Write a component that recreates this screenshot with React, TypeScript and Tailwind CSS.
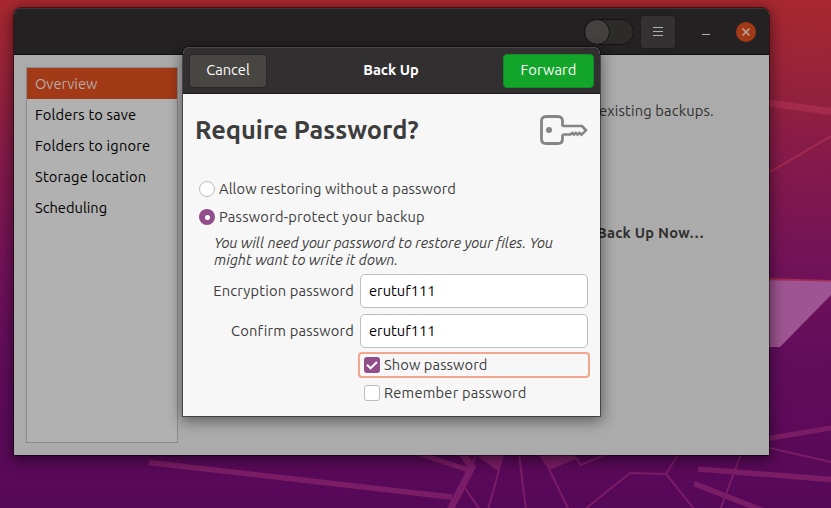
import type { ReactNode } from "react";

const sections = [
  { label: "Overview", tracking: "tracking-[-0.05px]" },
  { label: "Folders to save", tracking: "tracking-[0.17px]" },
  { label: "Folders to ignore", tracking: "tracking-[0.17px]" },
  { label: "Storage location", tracking: "tracking-[0.21px]" },
  { label: "Scheduling", tracking: "tracking-[0px]" },
];

function Wallpaper() {
  return (
    <svg className="absolute inset-0" width="831" height="508" viewBox="0 0 831 508">
      <defs>
        <linearGradient id="sky" x1="0" y1="0" x2="0" y2="1">
          <stop offset="0" stopColor="#a8282f" />
          <stop offset="0.12" stopColor="#9b2437" />
          <stop offset="0.3" stopColor="#861b49" />
          <stop offset="0.5" stopColor="#741358" />
          <stop offset="0.7" stopColor="#620d5b" />
          <stop offset="1" stopColor="#560858" />
        </linearGradient>
      </defs>
      <rect width="831" height="508" fill="url(#sky)" />
      <g stroke="#a42a4e" fill="none">
        <path d="M765 102.500 L831 111.500" strokeWidth="7" />
        <path d="M765 175 L831 136" strokeWidth="2" />
        <path d="M765 279 L831 281" strokeWidth="2" />
      </g>
      <path d="M765 280 L831 281.500 V295 L780 347 H765 Z" fill="#9e5492" />
      <g stroke="#7b1d66" fill="none">
        <path d="M149 462.500 L420 493.500 L452 497" strokeWidth="5.500" />
        <path d="M420 454 L471 471" strokeWidth="5" />
        <path d="M462 453 L472 467 L450 510" strokeWidth="7" />
        <path d="M476 454 L471 468 M465 488 L480 510" strokeWidth="2" />
        <path d="M499 470 L488 510 M519 454 L526 510 M549 469 L569 510" strokeWidth="2" />
        <path d="M574 455 L581 465 L606 454" strokeWidth="2" />
        <path d="M584 510 L630 473 L666 474 L679 453 M666 474 L695 510" strokeWidth="2" />
        <path d="M741 454 L720 510" strokeWidth="2" />
        <path d="M698 469 L831 479.500" strokeWidth="5.500" />
        <path d="M694 483.500 L764 511" strokeWidth="5.500" />
        <path d="M765 439 L831 428" strokeWidth="5" />
        <path d="M765 447 L831 462" strokeWidth="2" />
      </g>
      <g fill="#7b1d66">
        <path d="M476 455 H504 L499 472 Z" />
        <path d="M539 455 H574 L576 459 L549 470 Z" />
      </g>
    </svg>
  );
}

function KeyIcon() {
  return (
    <svg width="48" height="32" viewBox="0 0 48 32" fill="none" stroke="#858585">
      <path
        d="M22.500 11.500 V6 Q22.500 1.500 18 1.500 H6 Q1.500 1.500 1.500 6 V24 Q1.500 28.500 6 28.500 H18 Q22.500 28.500 22.500 24 V19.500"
        strokeWidth="2.800"
      />
      <path
        d="M22.500 11 H42 L46 15.300 L41.500 19.800 L39.500 18 L37.500 19.500 L35.800 18 L34 19.500 L32.200 18 L30.500 19.500 H22.500"
        strokeWidth="2.600"
      />
      <circle cx="9" cy="15" r="3" fill="#858585" stroke="none" />
    </svg>
  );
}

function Field({ label, tracking, value }: { label: string; tracking: string; value: string }) {
  return (
    <div className="flex items-center">
      <span className={`w-[171px] pb-[2px] text-right ${tracking}`}>{label}</span>
      <div className="ml-[6px] flex h-[34px] w-[228px] items-center rounded-[5px] border border-[#bfbcba] bg-white pb-[2px] pl-2 text-black">
        {value}
      </div>
    </div>
  );
}

function Radio({ checked, children }: { checked?: boolean; children: ReactNode }) {
  return (
    <div className="flex h-7 items-center gap-1">
      {checked ? (
        <span className="flex size-4 items-center justify-center rounded-full bg-[#924d8b]">
          <span className="size-[5px] rounded-full bg-white" />
        </span>
      ) : (
        <span className="size-4 rounded-full border border-[#bfbcba] bg-white" />
      )}
      {children}
    </div>
  );
}

export default function App() {
  return (
    <div className="relative h-[508px] w-[831px] overflow-hidden font-['Ubuntu','Noto_Sans',sans-serif] text-[14.667px] leading-[17px] whitespace-nowrap text-[#3d3d3d]">
      <Wallpaper />

      <main className="absolute top-[8px] left-[14px] flex h-[447px] w-[755px] flex-col overflow-hidden rounded-t-[7px] bg-[#ababab] shadow-[0_0_0_1px_rgba(0,0,0,0.45),0_3px_14px_2px_rgba(0,0,0,0.5)]">
        <header className="flex h-[47px] shrink-0 items-center justify-end border-t border-b border-t-[#373535] border-b-[#121111] bg-[#242122] pr-[13px]">
          <div className="h-[26px] w-[50px] rounded-full border border-[#121212] bg-[#2d2b29]">
            <div className="-mt-px -ml-px size-[26px] rounded-full border border-[#121212] bg-[#434240]" />
          </div>
          <div className="ml-[6px] flex h-[34px] w-[36px] items-center justify-center rounded-[4px] border border-[#1e1c1d] bg-[#343132]">
            <div className="flex flex-col gap-[3px]">
              <span className="h-px w-[10px] bg-[#b0b0b0]" />
              <span className="h-px w-[10px] bg-[#b0b0b0]" />
              <span className="h-px w-[10px] bg-[#b0b0b0]" />
            </div>
          </div>
          <span className="mt-[5px] ml-[26px] h-px w-2 bg-[#b0b0b0]" />
          <div className="ml-[26px] flex size-5 items-center justify-center rounded-full bg-[#a33a17]">
            <svg width="8" height="8" viewBox="0 0 8 8" stroke="#b7aaa5" strokeWidth="1.500">
              <path d="M0.500 0.500 L7.500 7.500 M7.500 0.500 L0.500 7.500" />
            </svg>
          </div>
        </header>
        <div className="flex grow justify-between p-3">
          <nav className="h-[376px] w-[152px] border border-[#8a8a8a] bg-[#b1b1b1] text-black">
            {sections.map((s, i) => (
              <div
                key={s.label}
                className={`flex h-[31px] items-center pb-px pl-2 ${s.tracking} ${i === 0 ? "bg-[#a23917] text-[#b9aba4]" : ""}`}
              >
                {s.label}
              </div>
            ))}
          </nav>
          <div className="flex w-[160px] flex-col pt-[35px] text-[#303030]">
            <span className="pl-[2px] tracking-[0.16px]">existing backups.</span>
            <span className="mt-[105px] font-bold tracking-[0.25px]">Back Up Now…</span>
          </div>
        </div>
      </main>

      <section className="absolute top-[47px] left-[183px] flex h-[369px] w-[417px] flex-col overflow-hidden rounded-t-[7px] bg-[#f7f7f7] shadow-[0_0_0_1px_rgba(0,0,0,0.45),0_3px_14px_2px_rgba(0,0,0,0.45)]">
        <header className="flex h-[47px] shrink-0 items-center justify-between border-t border-b border-t-[#4a4848] border-b-[#1a1818] bg-[#322f30] px-[6px] text-white">
          <div className="flex h-[34px] w-[78px] items-center justify-center rounded-[4px] border border-[#292627] bg-[#484643] pb-[2px]">
            Cancel
          </div>
          <span className="ml-[12px] pb-[2px] font-bold">Back Up</span>
          <div className="flex h-[34px] w-[91px] items-center justify-center rounded-[4px] border border-[#108c24] bg-[#13a52a] pb-[2px] tracking-[0.1px]">
            Forward
          </div>
        </header>
        <div className="flex h-[72px] items-center justify-between pt-px pr-3 pl-3">
          <h1 className="pb-[2px] text-[25.4px] leading-7 font-bold">Require Password?</h1>
          <KeyIcon />
        </div>
        <div className="flex flex-col pt-[9px] pl-4">
          <Radio>
            <span className="pb-[2px] tracking-[0.12px]">Allow restoring without a password</span>
          </Radio>
          <Radio checked>
            <span className="pb-[2px] tracking-[0.22px]">Password-protect your backup</span>
          </Radio>
        </div>
        <p className="mt-[3px] ml-[31px] italic">
          You will need your password to restore your files. You
          <br />
          might want to write it down.
        </p>
        <div className="mt-[6px] flex flex-col gap-[6px]">
          <Field label="Encryption password" tracking="tracking-[0.17px]" value="erutuf111" />
          <Field label="Confirm password" tracking="tracking-[0.18px]" value="erutuf111" />
        </div>
        <div className="mt-1 ml-[175px] flex h-[26px] w-[232px] items-center gap-1 rounded-[4px] border-2 border-[#f3a68c] pl-1 tracking-[0.1px]">
          <span className="flex size-4 items-center justify-center rounded-[3px] bg-[#924d8b]">
            <svg width="12" height="9" viewBox="0 0 12 9" fill="none" stroke="#fff" strokeWidth="2">
              <path d="M1 3.800 L4.500 7.300 L11 1" />
            </svg>
          </span>
          <span className="pb-[2px]">Show password</span>
        </div>
        <div className="mt-[7px] ml-[181px] flex h-4 items-center gap-1 tracking-[0.2px]">
          <span className="size-4 rounded-[3px] border border-[#bfbcba] bg-white" />
          <span className="pb-[2px]">Remember password</span>
        </div>
      </section>
    </div>
  );
}
